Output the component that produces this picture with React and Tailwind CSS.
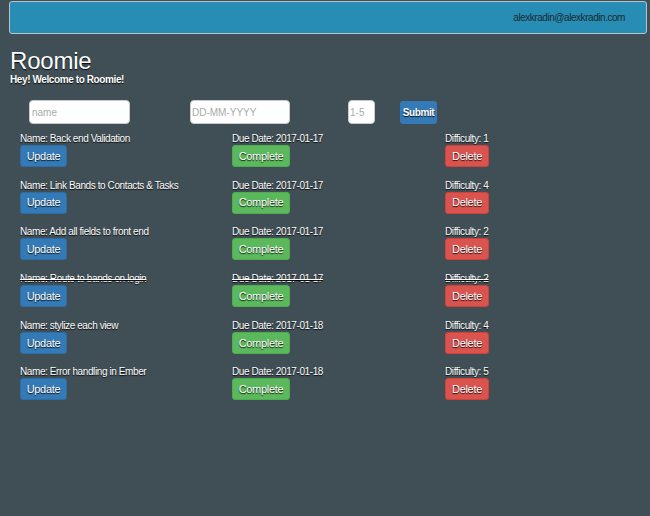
import React from "react";

const chores = [
  { name: "Back end Validation", due: "2017-01-17", difficulty: 1, done: false },
  { name: "Link Bands to Contacts & Tasks", due: "2017-01-17", difficulty: 4, done: false },
  { name: "Add all fields to front end", due: "2017-01-17", difficulty: 2, done: false },
  { name: "Route to bands on login", due: "2017-01-17", difficulty: 2, done: true },
  { name: "stylize each view", due: "2017-01-18", difficulty: 4, done: false },
  { name: "Error handling in Ember", due: "2017-01-18", difficulty: 5, done: false },
];

const shadow = "[text-shadow:0_1px_1px_rgba(0,0,0,0.9)]";

const App = () => {
  return (
    <div className="min-h-[516px] bg-[#404f56] font-['Liberation_Sans',Arial,sans-serif] text-white">
      <div className="pl-[9px] pr-[3px] pt-[1px]">
        <div className="h-[33px] flex items-center justify-end pr-[21px] bg-[#278db4] border border-[#b9c4c9] rounded-[3px] text-[10px] tracking-[-0.45px] text-[#1b2a30]">
          alexkradin@alexkradin.com
        </div>
      </div>

      <div className={`px-[10px] pt-[13px] ${shadow}`}>
        <h1 className="text-[24px] leading-[27px] font-normal tracking-[-0.2px]">Roomie</h1>
        <p className="text-[10px] leading-[11px] font-bold tracking-[-0.4px]">Hey! Welcome to Roomie!</p>
      </div>

      <form className="flex items-center pl-[29px] pt-[15px]" onSubmit={(e) => e.preventDefault()}>
        <input
          placeholder="name"
          className="w-[101px] h-[24px] bg-white rounded-[4px] border border-[#ccc] px-[2px] text-[10px] text-black placeholder:text-[#aaa] outline-none"
        />
        <input
          placeholder="DD-MM-YYYY"
          className="ml-[60px] w-[100px] h-[24px] bg-white rounded-[4px] border border-[#ccc] px-[1px] text-[10px] text-black placeholder:text-[#aaa] outline-none"
        />
        <input
          placeholder="1-5"
          className="ml-[58px] w-[27px] h-[24px] bg-white rounded-[4px] border border-[#ccc] px-[1px] text-[10px] text-black placeholder:text-[#aaa] outline-none"
        />
        <button
          type="submit"
          className={`ml-[25px] h-[23px] w-[37px] bg-[#337ab7] rounded-[3px] text-[10px] font-bold tracking-[-0.4px] text-white ${shadow}`}
        >
          Submit
        </button>
      </form>

      <div className="pl-[20px] pt-[9px] flex flex-col gap-[3px]">
        {chores.map((c, i) => (
          <div key={i} className="grid grid-cols-[212px_213px_100px] h-[43.7px] text-[10px] tracking-[-0.4px]">
            <div>
              <p className={`leading-[12px] ${shadow} ${c.done ? "line-through" : ""}`}>
                Name: {c.name}
              </p>
              <button className={`h-[22px] w-[47px] bg-[#337ab7] border border-[#2e6da4] rounded-[3px] text-[11px] tracking-[-0.3px] ${shadow}`}>
                Update
              </button>
            </div>
            <div>
              <p className={`leading-[12px] ${shadow} ${c.done ? "line-through" : ""}`}>
                Due Date: {c.due}
              </p>
              <button className={`h-[22px] w-[58px] bg-[#5cb85c] border border-[#4cae4c] rounded-[3px] text-[11px] tracking-[-0.3px] ${shadow}`}>
                Complete
              </button>
            </div>
            <div>
              <p className={`leading-[12px] ${shadow} ${c.done ? "line-through" : ""}`}>
                Difficulty: {c.difficulty}
              </p>
              <button className={`h-[22px] w-[44px] bg-[#d9534f] border border-[#d43f3a] rounded-[3px] text-[11px] tracking-[-0.3px] ${shadow}`}>
                Delete
              </button>
            </div>
          </div>
        ))}
      </div>
    </div>
  );
};

export default App;
